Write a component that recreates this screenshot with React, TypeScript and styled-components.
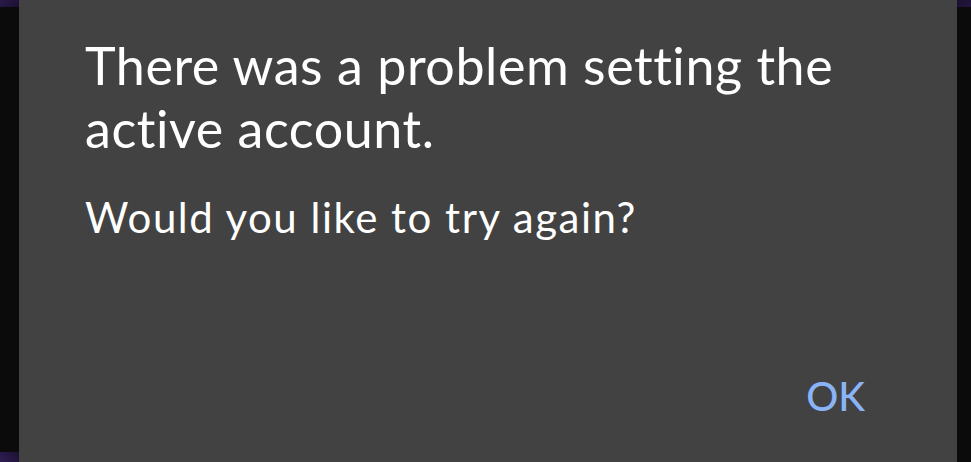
import styled, { createGlobalStyle } from 'styled-components';

const GlobalStyle = createGlobalStyle`
  html, body {
    margin: 0;
    padding: 0;
    height: 100%;
  }
  body {
    background:
      linear-gradient(135deg, #2a1a4a 0%, #1a1030 100%) left top / 19px 7px no-repeat,
      linear-gradient(135deg, #1a1030 0%, #241540 100%) right top / 14px 7px no-repeat,
      linear-gradient(45deg, #2f1d55 0%, #1a1030 100%) left bottom / 19px 10px no-repeat,
      #0b0b0b;
    font-family: Lato, 'Noto Sans', sans-serif;
    font-variant-ligatures: none;
    overflow: hidden;
  }
  #root {
    height: 100%;
  }
`;

const Screen = styled.div`
  height: 462px;
  display: flex;
  padding: 0 14px 0 19px;
`;

const Dialog = styled.div`
  flex: 1;
  background: #424242;
  display: flex;
  flex-direction: column;
  padding: 34px 40px 20px 66px;
  color: #ffffff;
`;

const Title = styled.h1`
  margin: 0;
  font-size: 52px;
  line-height: 63px;
  font-weight: 400;
  letter-spacing: 0.55px;
`;

const Message = styled.p`
  margin: 29px 0 0;
  font-size: 42px;
  line-height: 56px;
  font-weight: 400;
  letter-spacing: 1.5px;
`;

const Actions = styled.div`
  margin-top: auto;
  display: flex;
  justify-content: flex-end;
  padding-right: 52px;
  padding-bottom: 22px;
`;

const TextButton = styled.button`
  background: none;
  border: none;
  padding: 0;
  color: #8ab4f8;
  font-family: inherit;
  font-size: 40px;
  font-weight: 500;
  line-height: 48px;
  letter-spacing: 0;
  cursor: pointer;
`;

export default function App() {
  return (
    <>
      <GlobalStyle />
      <Screen>
        <Dialog>
          <Title>There was a problem setting the active account.</Title>
          <Message>Would you like to try again?</Message>
          <Actions>
            <TextButton>OK</TextButton>
          </Actions>
        </Dialog>
      </Screen>
    </>
  );
}
